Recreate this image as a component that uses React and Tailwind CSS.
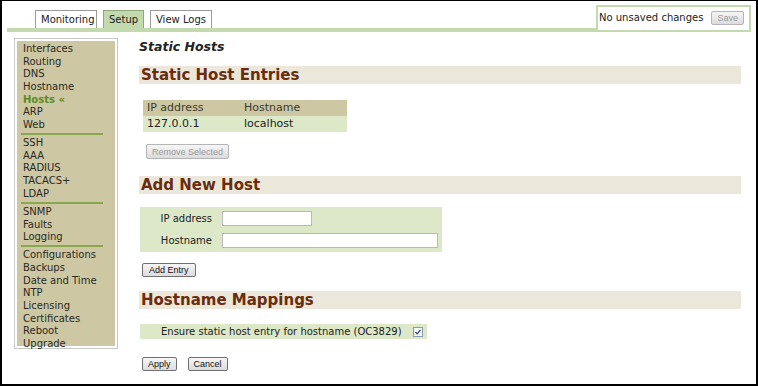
import React from "react";

const groups = [
  ["Interfaces", "Routing", "DNS", "Hostname", "Hosts", "ARP", "Web"],
  ["SSH", "AAA", "RADIUS", "TACACS+", "LDAP"],
  ["SNMP", "Faults", "Logging"],
  ["Configurations", "Backups", "Date and Time", "NTP", "Licensing", "Certificates", "Reboot", "Upgrade"],
];

const Btn = ({ children, disabled, className = "" }) => (
  <button
    className={`h-[14px] px-[5px] text-[9px] leading-[12px] font-['Liberation_Sans',sans-serif] border rounded-[2px] bg-gradient-to-b from-[#f6f6f6] to-[#dcdcdc] ${
      disabled ? "border-[#b5b5b5] text-[#9a9a9a]" : "border-[#707070] text-[#111]"
    } ${className}`}
  >
    {children}
  </button>
);

const SectionBar = ({ title, className = "" }) => (
  <div className={`h-[18px] bg-[#ebe7db] pl-[2px] text-[15px] leading-[18px] font-bold text-[#6a2c0c] ${className}`}>
    {title}
  </div>
);

const Tab = ({ label, active }) => (
  <div
    className={`h-[18px] px-[5px] leading-[17px] border border-b-0 ${
      active ? "bg-[#c3d9ae] border-[#8fa87a]" : "bg-white border-[#9a9a9a]"
    }`}
  >
    {label}
  </div>
);

export default function App() {
  return (
    <div className="w-[758px] h-[386px] overflow-hidden bg-white border-black border-t border-x-2 border-b-2 font-['DejaVu_Sans',sans-serif] text-[10px] text-[#222]">
      {/* Header */}
      <div className="flex items-end pt-[4px] pl-[5px] pr-[5px]">
        <div className="flex-1 h-[22px] border-b-4 border-[#c3d9ae] pl-[28px] flex gap-[6px] items-end">
          <div className="w-[62px]"><Tab label="Monitoring" /></div>
          <div className="w-[41px]"><Tab label="Setup" active /></div>
          <div className="w-[62px]"><Tab label="View Logs" /></div>
        </div>
        <div className="w-[155px] h-[27px] border-2 border-[#c3d9ae] flex items-center pl-[1px] pr-[5px] pb-[2px]">
          <span>No unsaved changes</span>
          <Btn disabled className="ml-auto h-[13px] px-[3px]">Save</Btn>
        </div>
      </div>

      {/* Body */}
      <div className="flex pl-[12px]">
        <div className="mt-[6px] w-[104px] h-[311px] border border-[#c8c8c8] bg-white p-[2px]">
          <div className="h-full bg-[#cdc7a4] pl-[4px] pr-[12px] pt-[2px]">
            {groups.map((g, gi) => (
              <div key={gi}>
                {gi > 0 && <div className="h-[2px] bg-[#88a850] mt-[1.5px] mb-[2px]" />}
                {g.map((item) => (
                  <div
                    key={item}
                    className={`pl-[2px] leading-[12.65px] ${
                      item === "Hosts" ? "font-bold text-[#5b8b22]" : "text-[#2a2a22]"
                    }`}
                  >
                    {item === "Hosts" ? "Hosts «" : item}
                  </div>
                ))}
              </div>
            ))}
          </div>
        </div>

        <div className="flex-1 ml-[21px] mr-[15px] pt-[7px]">
          <div className="text-[12.5px] leading-[15px] font-bold italic">Static Hosts</div>

          <SectionBar title="Static Host Entries" className="mt-[12px]" />
          <div className="ml-[4px] mt-[16px] w-[204px] text-[11px] leading-[16px]">
            <div className="flex bg-[#cdc7a4] text-[#3a3a2a]">
              <div className="w-[98px] pl-[4px]">IP address</div>
              <div className="pl-[3px]">Hostname</div>
            </div>
            <div className="flex bg-[#dce8c8]">
              <div className="w-[98px] pl-[4px]">127.0.0.1</div>
              <div className="pl-[3px]">localhost</div>
            </div>
          </div>
          <Btn disabled className="ml-[7px] mt-[12px] h-[15px]">Remove Selected</Btn>

          <SectionBar title="Add New Host" className="mt-[17px]" />
          <div className="ml-[1px] mt-[13px] w-[302px] bg-[#dce8c8] pt-[4px] pb-[4px] pr-[4px]">
            <div className="flex items-center h-[15px]">
              <div className="w-[72px] text-right">IP address</div>
              <input className="ml-[10px] w-[90px] h-[15px] bg-white border border-[#b9b9b9]" />
            </div>
            <div className="flex items-center h-[15px] mt-[7px]">
              <div className="w-[72px] text-right">Hostname</div>
              <input className="ml-[10px] w-[216px] h-[15px] bg-white border border-[#b9b9b9]" />
            </div>
          </div>
          <Btn className="ml-[3px] mt-[11px] px-[6px]">Add Entry</Btn>

          <SectionBar title="Hostname Mappings" className="mt-[14px]" />
          <div className="ml-[1px] mt-[15px] w-[287px] h-[15px] bg-[#dce8c8] flex items-center pl-[21px]">
            <span>Ensure static host entry for hostname (OC3829)</span>
            <span className="ml-[11px] w-[10px] h-[10px] border border-[#8a9cb0] bg-[#f4f6fa] flex items-center justify-center">
              <svg width="8" height="8" viewBox="0 0 8 8">
                <path d="M1.5 4 L3.2 5.8 L6.5 1.8" fill="none" stroke="#2b3f7a" strokeWidth="1.2" />
              </svg>
            </span>
          </div>
          <div className="flex gap-[11px] ml-[3px] mt-[18px]">
            <Btn>Apply</Btn>
            <Btn>Cancel</Btn>
          </div>
        </div>
      </div>
    </div>
  );
}
